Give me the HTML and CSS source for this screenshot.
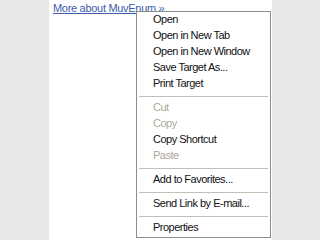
FILE: index.html
```html
<!DOCTYPE html>
<html lang="en">
<head>
  <meta charset="UTF-8">
  <title>Link Menu</title>
  <link rel="stylesheet" href="styles.css">
</head>
<body>
  <div class="page">
    <div class="side"></div>
    <div class="content">
      <a class="more-link" href="#">More about MuvEnum &raquo;</a>
    </div>
    <div class="side side-right"></div>
  </div>

  <!-- Context menu -->
  <ul class="context-menu">
    <li class="item">Open</li>
    <li class="item">Open in New Tab</li>
    <li class="item">Open in New Window</li>
    <li class="item">Save Target As...</li>
    <li class="item">Print Target</li>
    <li class="sep"></li>
    <li class="item disabled">Cut</li>
    <li class="item disabled">Copy</li>
    <li class="item">Copy Shortcut</li>
    <li class="item disabled">Paste</li>
    <li class="sep"></li>
    <li class="item">Add to Favorites...</li>
    <li class="sep"></li>
    <li class="item">Send Link by E-mail...</li>
    <li class="sep"></li>
    <li class="item">Properties</li>
  </ul>
</body>
</html>
```

FILE: styles.css
```css
:root {
  --side-bg: #e7e8e5;
  --page-bg: #ffffff;
  --link-color: #3b5cae;
  --menu-border: #8d8d8a;
  --menu-text: #111111;
  --menu-disabled: #aca899;
  --sep-color: #c2bfb5;
}
* {
  box-sizing: border-box;
}
body {
  margin: 0;
  font-family: 'Liberation Sans', Arial, sans-serif;
  font-size: 11px;
  background-color: var(--page-bg);
}
.page {
  display: flex;
  height: 240px;
}
.side {
  width: 49px;
  background-color: var(--side-bg);
}
.side-right {
  width: 48px;
}
.content {
  flex: 1;
  padding: 2px 0 0 4px;
}
.more-link {
  color: var(--link-color);
  line-height: 12px;
  letter-spacing: -0.3px;
}
.context-menu {
  position: absolute;
  left: 136px;
  top: 11px;
  width: 135px;
  height: 227px;
  margin: 0;
  padding: 1px 0 0;
  list-style: none;
  background-color: #fff;
  border: 1px solid var(--menu-border);
}
.item {
  height: 16px;
  line-height: 13px;
  padding-left: 16px;
  color: var(--menu-text);
  letter-spacing: -0.5px;
  white-space: nowrap;
}
.item.disabled {
  color: var(--menu-disabled);
}
.sep {
  margin: 3px 2px 4px;
  border-top: 1px solid var(--sep-color);
}
```
